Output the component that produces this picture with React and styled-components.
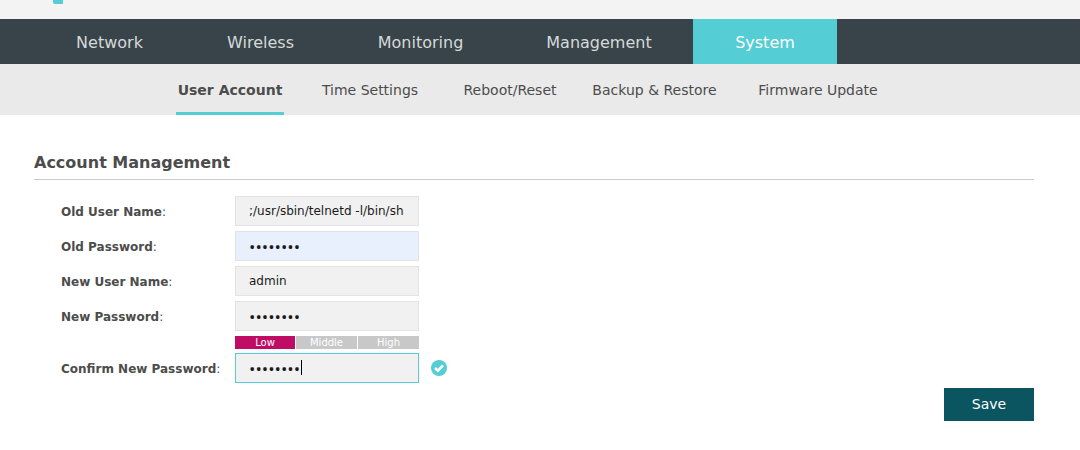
import React, { useState } from "react";
import styled, { createGlobalStyle } from "styled-components";

const GlobalStyle = createGlobalStyle`
  * { box-sizing: border-box; }
  body {
    margin: 0;
    background: #fff;
    color: #4c4c4c;
    font-family: Verdana, "DejaVu Sans", sans-serif;
    font-size: 12px;
  }
`;

const Header = styled.header`
  height: 19px;
  padding-left: 53px;
  background: #f3f3f3;
`;

const Logo = styled.svg`
  display: block;
`;

const MainNav = styled.nav`
  display: grid;
  grid-template-columns: 151px 151px 169px 188px 144px;
  padding-left: 34px;
  background: #384449;
`;

const MainLink = styled.a`
  padding-top: 2px;
  font-size: 16px;
  line-height: 43px;
  text-align: center;
  text-decoration: none;
  color: ${(p) => (p.$active ? "#fff" : "#d6d9da")};
  background: ${(p) => (p.$active ? "#54cdd5" : "transparent")};
`;

const SubNav = styled.nav`
  display: grid;
  grid-template-columns: 140px 140px 140px 149px 178px;
  justify-items: center;
  padding-left: 160px;
  background: #eaeaea;
`;

const SubLink = styled.a`
  padding: 5px 2px 0;
  border-bottom: 3px solid ${(p) => (p.$active ? "#54cdd5" : "transparent")};
  font-size: 14px;
  font-weight: ${(p) => (p.$active ? "bold" : "normal")};
  line-height: 43px;
  white-space: nowrap;
  text-decoration: none;
  color: #4c4c4c;
`;

const Content = styled.main`
  padding: 36px 46px 29px 34px;
`;

const Title = styled.h1`
  margin: 0 0 16px;
  padding: 2px 0 6px;
  border-bottom: 1px solid #cacaca;
  font-size: 16px;
  line-height: 20px;
`;

const Form = styled.form`
  display: flex;
  flex-direction: column;
`;

const Row = styled.div`
  display: flex;
  align-items: center;
  margin-bottom: 5px;
  padding-left: 27px;
`;

const Label = styled.label`
  width: 174px;
  padding-top: 2px;
  font-weight: bold;
  white-space: nowrap;
`;

const Colon = styled.span`
  font-weight: normal;
`;

const Field = styled.div`
  position: relative;
  width: 184px;
`;

const Input = styled.input`
  display: block;
  width: 100%;
  height: 30px;
  padding: 0 9px 0 13px;
  border: 1px solid ${(p) => (p.$current ? "#54cdd5" : "#e3e3e3")};
  border-radius: 0;
  outline: none;
  background: ${(p) => (p.$filled ? "#e8f0fe" : "#f1f1f1")};
  color: #1a1a1a;
  font-family: ${(p) => (p.type === "password" ? '"Open Sans", sans-serif' : "inherit")};
  font-size: ${(p) => (p.type === "password" ? "17px" : "12px")};
`;

const Caret = styled.span`
  position: absolute;
  top: 7px;
  left: 66px;
  width: 1px;
  height: 15px;
  background: #000;
`;

const Strength = styled.div`
  display: grid;
  grid-template-columns: 60px 61px 61px;
  gap: 1px;
  margin: 0 0 4px 201px;
`;

const Level = styled.span`
  color: #fff;
  background: ${(p) => (p.$active ? "#bf0d65" : "#c8c8c8")};
  font-size: 10px;
  line-height: 13px;
  text-align: center;
`;

const ValidIcon = styled.svg`
  margin-left: 12px;
`;

const SaveButton = styled.button`
  align-self: flex-end;
  width: 90px;
  height: 33px;
  padding: 0 0 2px;
  border: 0;
  background: #0a5560;
  color: #fff;
  font-family: inherit;
  font-size: 14px;
`;

const mainItems = ["Network", "Wireless", "Monitoring", "Management", "System"];
const subItems = ["User Account", "Time Settings", "Reboot/Reset", "Backup & Restore", "Firmware Update"];

function FormRow({ id, label, type = "text", initial, filled, current }) {
  const [value, setValue] = useState(initial);
  return (
    <Row>
      <Label htmlFor={id}>{label}<Colon>:</Colon></Label>
      <Field>
        <Input
          id={id}
          type={type}
          value={value}
          onChange={(e) => setValue(e.target.value)}
          $filled={filled}
          $current={current}
        />
        {current && <Caret />}
      </Field>
      {current && (
        <ValidIcon width="16" height="16" viewBox="0 0 16 16" aria-hidden="true">
          <circle cx="8" cy="8" r="8" fill="#54cdd5" />
          <path d="M4 8 L6.9 10.6 L12 5.4" fill="none" stroke="#fff" strokeWidth="2.6" />
        </ValidIcon>
      )}
    </Row>
  );
}

export default function App() {
  return (
    <>
      <GlobalStyle />
      <Header>
        <Logo width="10" height="4" viewBox="0 0 10 4" aria-hidden="true">
          <path d="M0 0H10V4H2Q0 4 0 2Z" fill="#54cdd5" />
        </Logo>
      </Header>
      <MainNav>
        {mainItems.map((item) => (
          <MainLink key={item} href="#" $active={item === "System"}>{item}</MainLink>
        ))}
      </MainNav>
      <SubNav>
        {subItems.map((item) => (
          <SubLink key={item} href="#" $active={item === "User Account"}>{item}</SubLink>
        ))}
      </SubNav>
      <Content>
        <Title>Account Management</Title>
        <Form onSubmit={(e) => e.preventDefault()}>
          <FormRow id="old-name" label="Old User Name" initial=";/usr/sbin/telnetd -l/bin/sh" />
          <FormRow id="old-pass" label="Old Password" type="password" initial="password" filled />
          <FormRow id="new-name" label="New User Name" initial="admin" />
          <FormRow id="new-pass" label="New Password" type="password" initial="password" />
          <Strength>
            <Level $active>Low</Level>
            <Level>Middle</Level>
            <Level>High</Level>
          </Strength>
          <FormRow id="confirm-pass" label="Confirm New Password" type="password" initial="password" current />
          <SaveButton type="submit">Save</SaveButton>
        </Form>
      </Content>
    </>
  );
}
